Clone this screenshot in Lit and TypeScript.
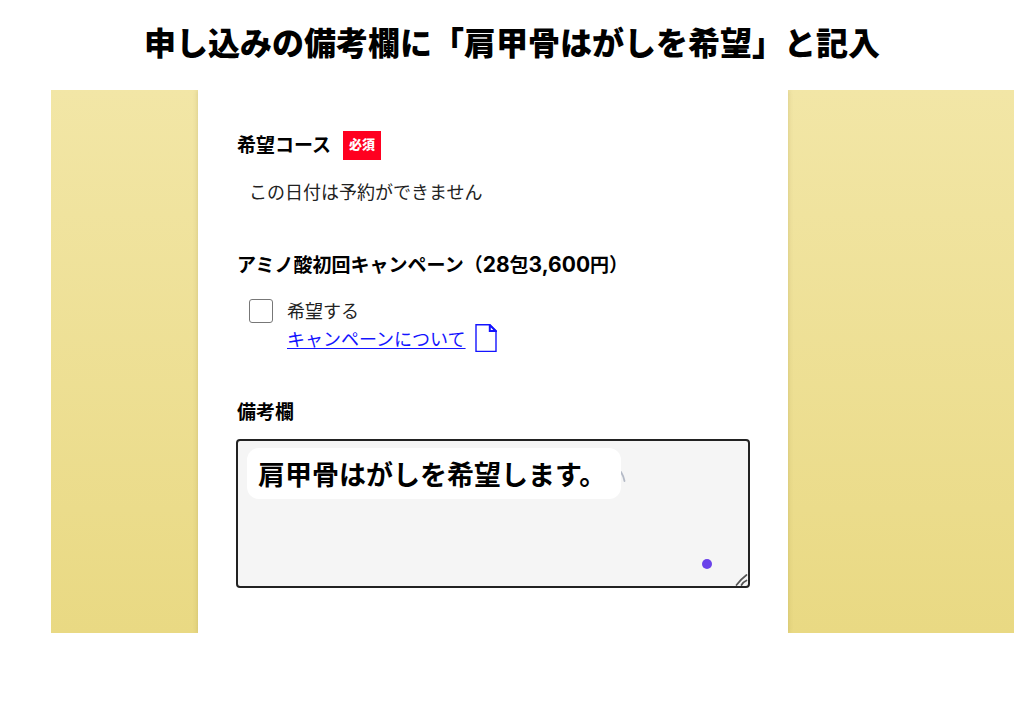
import { LitElement, html, css } from "lit";
import { customElement } from "lit/decorators.js";

@customElement("app-root")
export class AppRoot extends LitElement {
  static styles = css`
    :host {
      display: block;
      color: #000;
      background: #fff;
      font-family: "Noto Sans CJK JP", "Noto Sans", sans-serif;
    }
    .title {
      margin: 0;
      padding: 17px 16px 25px;
      font-size: 32px;
      line-height: 48px;
      font-weight: 900;
      text-align: center;
    }
    .backdrop {
      display: flex;
      margin: 0 10px 90px 51px;
      padding: 0 226px 0 147px;
      overflow: hidden;
      background: linear-gradient(#f2e6a6, #e9d983);
    }
    .form {
      flex: 1;
      min-width: 0;
      display: flex;
      flex-direction: column;
      gap: 46px;
      padding: 41px 38px 45px;
      background: #fff;
      box-shadow: 0 0 5px rgba(90, 70, 0, 0.2);
    }
    .heading {
      display: flex;
      align-items: flex-start;
      gap: 12px;
      margin: 0;
      padding-left: 1px;
      font-size: 19px;
      line-height: 25px;
      font-weight: 700;
    }
    .figure {
      font-family: Inter, "Noto Sans CJK JP", sans-serif;
      font-size: 21px;
      font-weight: 700;
    }
    .badge {
      padding: 0 6px 4px;
      background: #ff0020;
      color: #fff;
      font-size: 13px;
      line-height: 25px;
      font-weight: 900;
    }
    .message {
      margin: 17px 0 0;
      padding-left: 13px;
      color: #222;
      font-size: 18px;
      line-height: 28px;
    }
    .choice {
      display: grid;
      grid-template-columns: 24px 1fr;
      column-gap: 14px;
      align-items: center;
      margin-top: 20px;
      padding-left: 13px;
      color: #222;
      font-size: 18px;
      line-height: 27px;
    }
    .check {
      appearance: none;
      box-sizing: border-box;
      width: 24px;
      height: 24px;
      margin: 0;
      border: 1px solid #777;
      border-radius: 3px;
      background: #fff;
    }
    .check:checked {
      background: #6a42ea;
    }
    .more {
      grid-column: 2;
      display: flex;
      align-items: center;
      gap: 9px;
    }
    .link {
      color: #1414ff;
      text-decoration: underline;
      text-decoration-thickness: 1px;
      text-underline-offset: 2px;
    }
    .file {
      display: block;
      width: 22px;
      height: 28px;
    }
    .remarks {
      position: relative;
      margin-top: 16px;
    }
    .area {
      display: block;
      box-sizing: border-box;
      width: 100%;
      height: 149px;
      padding: 16px;
      border: 2px solid #222;
      border-radius: 4px;
      background: #f5f5f5;
      font: inherit;
      resize: none;
      outline: none;
    }
    .entry {
      position: absolute;
      top: 9px;
      left: 11px;
      margin: 0;
      padding: 0 15px 0 11px;
      border-radius: 12px;
      background: #fff;
      font-size: 27px;
      line-height: 51px;
      font-weight: 700;
      white-space: nowrap;
    }
    .stroke {
      position: absolute;
      top: 32px;
      left: 384px;
      width: 6px;
      height: 12px;
    }
    .dot {
      position: absolute;
      right: 38px;
      bottom: 19px;
      width: 10px;
      height: 10px;
      border-radius: 50%;
      background: #6a42ea;
    }
    .grip {
      position: absolute;
      right: 2px;
      bottom: 2px;
      width: 13px;
      height: 13px;
    }
  `;

  render() {
    return html`
      <h1 class="title">申し込みの備考欄に「肩甲骨はがしを希望」と記入</h1>
      <main class="backdrop">
        <form class="form">
          <section>
            <h2 class="heading">希望コース<span class="badge">必須</span></h2>
            <p class="message">この日付は予約ができません</p>
          </section>
          <section>
            <h2 class="heading">
              <span>アミノ酸初回キャンペーン（<span class="figure">28</span>包<span class="figure">3,600</span>円）</span>
            </h2>
            <div class="choice">
              <input class="check" type="checkbox" id="campaign" />
              <label for="campaign">希望する</label>
              <div class="more">
                <a class="link" href="#">キャンペーンについて</a>
                <svg class="file" viewBox="0 0 22 28" fill="none" stroke="#1414ff" aria-hidden="true">
                  <path d="M1 .8H14.5L21 7V27.5H1Z" stroke-width="1.4" />
                  <path d="M14.8 1V7H20.8Z" stroke-width="2" />
                </svg>
              </div>
            </div>
          </section>
          <section>
            <label class="heading" for="remarks">備考欄</label>
            <div class="remarks">
              <textarea class="area" id="remarks"></textarea>
              <svg class="stroke" viewBox="0 0 6 12" fill="none" stroke="#b4bac6" stroke-width="1.8" stroke-linecap="round" aria-hidden="true">
                <path d="M1 1Q3.5 5 4.5 10" />
              </svg>
              <p class="entry">肩甲骨はがしを希望します。</p>
              <span class="dot"></span>
              <svg class="grip" viewBox="0 0 13 13" fill="none" stroke="#555" stroke-width="1.7" stroke-linecap="round" aria-hidden="true">
                <path d="M1.5 12Q5.500 6.500 11.500 2M6.500 12Q8 9 11.500 7.500" />
              </svg>
            </div>
          </section>
        </form>
      </main>
    `;
  }
}
